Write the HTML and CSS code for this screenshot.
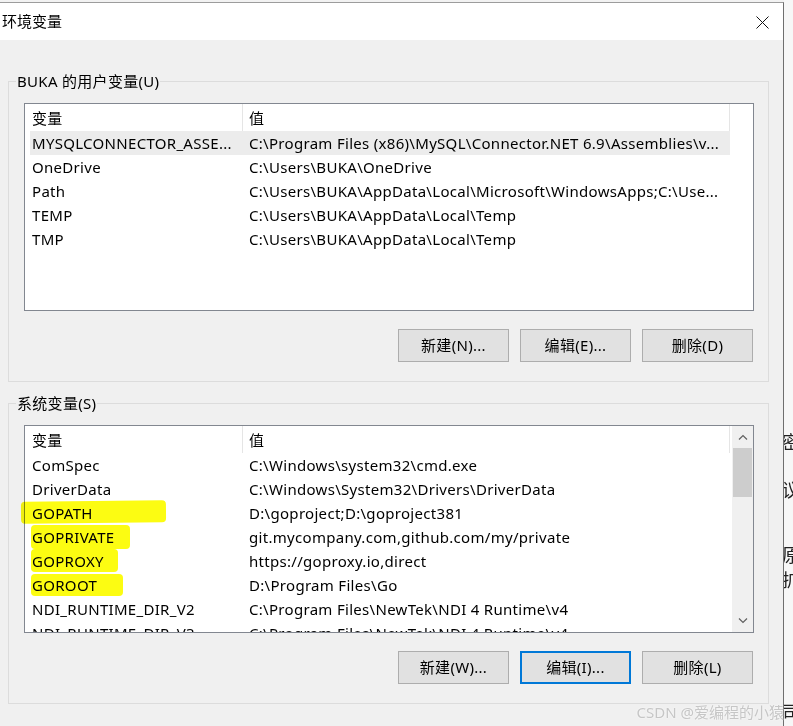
FILE: index.html
```html
<!DOCTYPE html>
<html lang="zh-CN">
<head>
  <meta charset="UTF-8" />
  <title>环境变量</title>
  <link rel="stylesheet" href="styles.css">
</head>
<body>

  <div class="screen">
    <!-- Dialog window -->
    <div class="dialog">
      <div class="titlebar">
        <span class="title">环境变量</span>
        <svg class="close" width="13" height="13" viewBox="0 0 13 13">
          <path d="M0.5 0.5 L12.5 12.5 M12.5 0.5 L0.5 12.5" stroke="#111" stroke-width="1" fill="none"/>
        </svg>
      </div>

      <div class="dialog-body">
        <!-- User variables -->
        <fieldset class="group">
          <legend>BUKA 的用户变量(U)</legend>
          <div class="group-body">
            <div class="listview">
              <div class="lv-main">
                <div class="lv-head">
                  <div class="cell c1">变量</div>
                  <div class="cell c2">值</div>
                </div>
                <div class="lv-row selected">
                  <div class="cell c1">MYSQLCONNECTOR_ASSE...</div>
                  <div class="cell c2">C:\Program Files (x86)\MySQL\Connector.NET 6.9\Assemblies\v...</div>
                </div>
                <div class="lv-row">
                  <div class="cell c1">OneDrive</div>
                  <div class="cell c2">C:\Users\BUKA\OneDrive</div>
                </div>
                <div class="lv-row">
                  <div class="cell c1">Path</div>
                  <div class="cell c2">C:\Users\BUKA\AppData\Local\Microsoft\WindowsApps;C:\Use...</div>
                </div>
                <div class="lv-row">
                  <div class="cell c1">TEMP</div>
                  <div class="cell c2">C:\Users\BUKA\AppData\Local\Temp</div>
                </div>
                <div class="lv-row">
                  <div class="cell c1">TMP</div>
                  <div class="cell c2">C:\Users\BUKA\AppData\Local\Temp</div>
                </div>
              </div>
            </div>
            <div class="buttons">
              <button class="btn">新建(N)...</button>
              <button class="btn">编辑(E)...</button>
              <button class="btn">删除(D)</button>
            </div>
          </div>
        </fieldset>

        <!-- System variables -->
        <fieldset class="group">
          <legend>系统变量(S)</legend>
          <div class="group-body">
            <div class="listview">
              <div class="lv-main">
                <div class="lv-head">
                  <div class="cell c1">变量</div>
                  <div class="cell c2">值</div>
                </div>
                <div class="lv-row">
                  <div class="cell c1">ComSpec</div>
                  <div class="cell c2">C:\Windows\system32\cmd.exe</div>
                </div>
                <div class="lv-row">
                  <div class="cell c1">DriverData</div>
                  <div class="cell c2">C:\Windows\System32\Drivers\DriverData</div>
                </div>
                <div class="lv-row">
                  <div class="cell c1">GOPATH</div>
                  <div class="cell c2">D:\goproject;D:\goproject381</div>
                </div>
                <div class="lv-row">
                  <div class="cell c1">GOPRIVATE</div>
                  <div class="cell c2">git.mycompany.com,github.com/my/private</div>
                </div>
                <div class="lv-row">
                  <div class="cell c1">GOPROXY</div>
                  <div class="cell c2">https://goproxy.io,direct</div>
                </div>
                <div class="lv-row">
                  <div class="cell c1">GOROOT</div>
                  <div class="cell c2">D:\Program Files\Go</div>
                </div>
                <div class="lv-row">
                  <div class="cell c1">NDI_RUNTIME_DIR_V2</div>
                  <div class="cell c2">C:\Program Files\NewTek\NDI 4 Runtime\v4</div>
                </div>
                <div class="lv-row">
                  <div class="cell c1">NDI_RUNTIME_DIR_V3</div>
                  <div class="cell c2">C:\Program Files\NewTek\NDI 4 Runtime\v4</div>
                </div>
              </div>
              <div class="scrollbar">
                <div class="sb-btn">
                  <svg width="10" height="6" viewBox="0 0 10 6"><path d="M1 5.5 L5 1.5 L9 5.5" stroke="#606060" stroke-width="1.2" fill="none"/></svg>
                </div>
                <div class="sb-thumb"></div>
                <div class="sb-track"></div>
                <div class="sb-btn">
                  <svg width="10" height="6" viewBox="0 0 10 6"><path d="M1 0.5 L5 4.5 L9 0.5" stroke="#606060" stroke-width="1.2" fill="none"/></svg>
                </div>
              </div>
            </div>
            <div class="buttons">
              <button class="btn">新建(W)...</button>
              <button class="btn focused">编辑(I)...</button>
              <button class="btn">删除(L)</button>
            </div>
          </div>
        </fieldset>
      </div>
    </div>

    <!-- Page behind the dialog, cut off at the right -->
    <div class="backdrop">
      <div class="bd-line l1">密</div>
      <div class="bd-line l2">议</div>
      <div class="bd-line l3">原</div>
      <div class="bd-line l4">扩</div>
      <div class="bd-line l5">司</div>
    </div>

    <!-- Highlighter marks drawn over the screenshot -->
    <div class="hl hl-gopath"></div>
    <div class="hl hl-goprivate"></div>
    <div class="hl hl-goproxy"></div>
    <div class="hl hl-goroot"></div>

    <div class="watermark">CSDN @爱编程的小猿</div>
  </div>

</body>
</html>
```

FILE: styles.css
```css
* {
  box-sizing: border-box;
}

body {
  margin: 0;
  background: #f2f2f2;
  font-family: "Noto Sans", "Noto Sans CJK SC", sans-serif;
  font-size: 15px;
  letter-spacing: 0.3px;
  color: #000;
}

.screen {
  display: flex;
  height: 726px;
  overflow: hidden;
  position: relative;
}

/* Dialog */
.dialog {
  width: 784px;
  flex-shrink: 0;
  margin-top: 2px;
  border-top: 1px solid #9c9c9c;
  border-right: 1px solid #6f6f6f;
  display: flex;
  flex-direction: column;
}

.titlebar {
  height: 37px;
  background: #fff;
  display: flex;
  align-items: center;
  justify-content: space-between;
  padding: 0 14px 0 2px;
}

.title {
  line-height: 37px;
  letter-spacing: 0;
}

.close {
  display: block;
  margin-top: 1px;
}

.dialog-body {
  flex: 1;
  background: #f0f0f0;
  padding: 31px 14px 0 8px;
}

/* Group boxes */
.group {
  margin: 0;
  padding: 0;
  min-width: 0;
  border: 1px solid #dcdcdc;
}

.group + .group {
  margin-top: 11px;
}

.group legend {
  margin-left: 7px;
  padding: 0 1px;
  line-height: 20px;
}

.group-body {
  padding: 12px 14px 19px 15px;
}

/* List views */
.listview {
  height: 208px;
  border: 1px solid #828790;
  background: #fff;
  display: flex;
  overflow: hidden;
}

.lv-main {
  flex: 1;
  min-width: 0;
  padding-left: 5px;
}

.lv-head,
.lv-row {
  display: flex;
  width: 700px;
  white-space: nowrap;
}

.lv-head {
  height: 27px;
  line-height: 28px;
}

.lv-head .cell {
  border-right: 1px solid #e5e5e5;
}

.lv-row {
  height: 24px;
  line-height: 24px;
}

.lv-row.selected {
  background: #ececec;
}

.cell {
  overflow: hidden;
  white-space: nowrap;
}

.c1 {
  width: 213px;
  padding-left: 2px;
}

.c2 {
  width: 487px;
  padding-left: 6px;
}

.lv-row .c1 {
  border-right: 1px solid transparent;
}

/* Scrollbar */
.scrollbar {
  width: 21px;
  flex-shrink: 0;
  background: #f0f0f0;
  display: flex;
  flex-direction: column;
  align-items: center;
}

.sb-btn {
  width: 100%;
  height: 22px;
  display: flex;
  align-items: center;
  justify-content: center;
}

.sb-btn svg {
  display: block;
}

.sb-thumb {
  width: 19px;
  height: 49px;
  background: #cdcdcd;
}

.sb-track {
  flex: 1;
}

/* Buttons */
.buttons {
  display: flex;
  justify-content: flex-end;
  gap: 11px;
  margin-top: 18px;
  padding-right: 1px;
}

.btn {
  width: 111px;
  height: 33px;
  padding: 0 0 2px;
  border: 1px solid #adadad;
  background: #e1e1e1;
  font-family: inherit;
  font-size: 15px;
  letter-spacing: 0.3px;
  color: #000;
}

.btn.focused {
  border: 2px solid #0078d7;
}

/* Background page behind the dialog */
.backdrop {
  flex: 1;
  overflow: hidden;
  background: #f7f7f7;
  display: flex;
  flex-direction: column;
  font-size: 18px;
  line-height: 20px;
  color: #222;
}

.bd-line {
  margin-left: -2px;
}

.l1 { margin-top: 432px; }
.l2 { margin-top: 28px; }
.l3 { margin-top: 45px; }
.l4 { margin-top: 5px; }
.l5 { margin-top: 112px; }

/* Yellow highlighter strokes */
.hl {
  position: absolute;
  background: #fcfc12;
  border-radius: 4px;
  mix-blend-mode: multiply;
}

.hl-gopath {
  left: 21px;
  top: 501px;
  width: 145px;
  height: 22px;
  transform: rotate(-0.6deg);
}

.hl-goprivate {
  left: 31px;
  top: 525px;
  width: 99px;
  height: 24px;
}

.hl-goproxy {
  left: 31px;
  top: 549px;
  width: 87px;
  height: 23px;
}

.hl-goroot {
  left: 31px;
  top: 574px;
  width: 92px;
  height: 22px;
}

.watermark {
  position: absolute;
  right: 9px;
  bottom: 6px;
  font-size: 15px;
  line-height: 16px;
  letter-spacing: 0;
  color: #c6c6c6;
  text-shadow: 0 0 2px #fff;
}
```
